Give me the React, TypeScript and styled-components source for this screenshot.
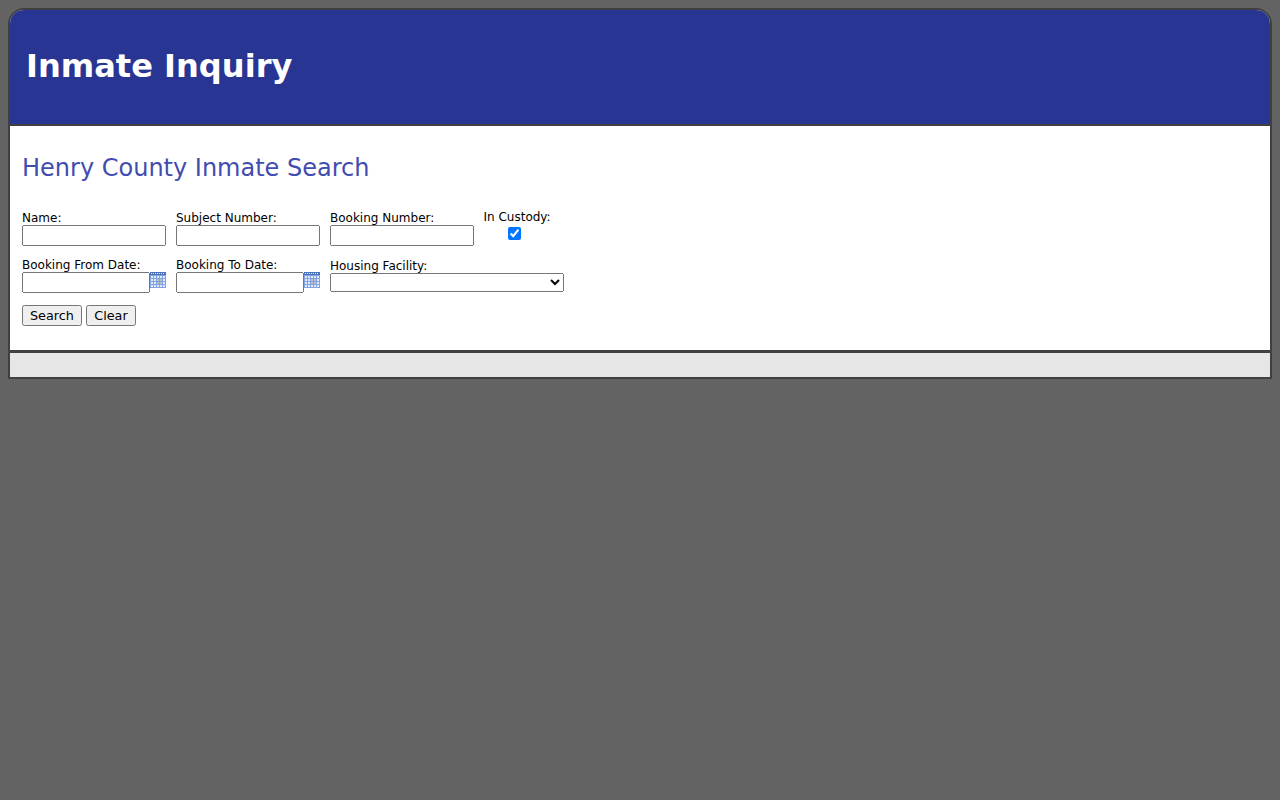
import React from "react";
import styled, { createGlobalStyle } from "styled-components";

const GlobalStyle = createGlobalStyle`
  html, body {
    margin: 0;
    min-height: 100%;
    background-color: #636363;
    font-family: "DejaVu Sans", sans-serif;
  }
`;

const CalendarIcon: React.FC = () => (
  <CalendarSvg width="16" height="16" viewBox="0 0 16 16" aria-hidden="true">
    <rect x="0" y="0" width="16" height="16" fill="#7fa3e4" />
    <rect x="0" y="0" width="16" height="3" fill="#4a72bd" />
    <path d="M1 1.5h1M3 1.5h1M5 1.5h1M7 1.5h1M9 1.5h1M11 1.5h1M13 1.5h1" stroke="#e4ecfa" strokeWidth="1" />
    {[4, 7, 10, 13].map((y) =>
      [1, 4, 7, 10, 13].map((x) => (
        <rect
          key={`${x}-${y}`}
          x={x}
          y={y}
          width="2"
          height="2"
          fill={x >= 7 && x <= 10 && y >= 7 && y <= 10 ? "#bdbdbd" : "#e2eafa"}
        />
      ))
    )}
  </CalendarSvg>
);

const App: React.FC = () => {
  return (
    <Page>
      <GlobalStyle />
      <Shell>
        <Header>
          <PageTitle>Inmate Inquiry</PageTitle>
        </Header>
        <Content>
          <SearchTitle>Henry County Inmate Search</SearchTitle>
          <Row>
            <Field>
              <Label htmlFor="name">Name:</Label>
              <TextInput id="name" type="text" />
            </Field>
            <Field>
              <Label htmlFor="subject">Subject Number:</Label>
              <TextInput id="subject" type="text" />
            </Field>
            <Field>
              <Label htmlFor="booking">Booking Number:</Label>
              <TextInput id="booking" type="text" />
            </Field>
            <CheckField>
              <CheckLabel htmlFor="custody">In Custody:</CheckLabel>
              <Checkbox id="custody" type="checkbox" defaultChecked />
            </CheckField>
          </Row>
          <DateRow>
            <Field>
              <Label htmlFor="from">Booking From Date:</Label>
              <DateGroup>
                <DateInput id="from" type="text" />
                <CalendarIcon />
              </DateGroup>
            </Field>
            <Field>
              <Label htmlFor="to">Booking To Date:</Label>
              <DateGroup>
                <DateInput id="to" type="text" />
                <CalendarIcon />
              </DateGroup>
            </Field>
            <SelectField>
              <SelectLabel htmlFor="facility">Housing Facility:</SelectLabel>
              <FacilitySelect id="facility">
                <option value=""></option>
              </FacilitySelect>
            </SelectField>
          </DateRow>
          <Buttons>
            <ActionButton type="button">Search</ActionButton>
            <ClearButton type="button">Clear</ClearButton>
          </Buttons>
        </Content>
        <Footer />
      </Shell>
    </Page>
  );
};

const Page = styled.div`
  padding: 8px;
`;

const Shell = styled.div`
  display: flex;
  flex-direction: column;
  border: 2px solid #404040;
  border-top-left-radius: 16px;
  border-top-right-radius: 16px;
  overflow: hidden;
  background-color: #ffffff;
`;

const Header = styled.div`
  display: flex;
  align-items: center;
  box-sizing: border-box;
  height: 116px;
  padding: 0 0 2px 16px;
  background-color: #283593;
  border-bottom: 2px solid #404040;
`;

const PageTitle = styled.h1`
  margin: 0;
  font-size: 32.1px;
  font-weight: bold;
  color: #ffffff;
`;

const Content = styled.div`
  display: flex;
  flex-direction: column;
  height: 224px;
  padding: 0 12px;
  box-sizing: border-box;
`;

const SearchTitle = styled.h2`
  margin: 28px 0 0;
  height: 56px;
  font-size: 24px;
  line-height: 28px;
  font-weight: normal;
  color: #3f4db0;
`;

const Row = styled.div`
  display: flex;
  gap: 10px;
`;

const DateRow = styled(Row)`
  margin-top: 11px;
`;

const Field = styled.div`
  display: flex;
  flex-direction: column;
  justify-content: flex-end;
  width: 144px;
`;

const SelectField = styled(Field)`
  width: 234px;
  justify-content: flex-start;
`;

const Label = styled.label`
  height: 15px;
  font-size: 12px;
  line-height: 17px;
  color: #000000;
`;

const SelectLabel = styled(Label)`
  line-height: 19px;
`;

const TextInput = styled.input`
  box-sizing: border-box;
  width: 144px;
  height: 21px;
  margin: 0;
  padding: 1px 2px;
  font-size: 13.333px;
  font-family: "DejaVu Sans", sans-serif;
`;

const DateGroup = styled.div`
  display: flex;
  align-items: flex-start;
`;

const DateInput = styled(TextInput)`
  width: 128px;
`;

const CalendarSvg = styled.svg`
  display: block;
  flex: none;
`;

const CheckField = styled.div`
  display: flex;
  flex-direction: column;
`;

const CheckLabel = styled(Label)`
  margin-left: -0.5px;
  height: 14px;
  line-height: 15px;
`;

const Checkbox = styled.input`
  width: 13px;
  height: 13px;
  margin: 3px 0 0 24px;
`;

const FacilitySelect = styled.select`
  box-sizing: border-box;
  width: 234px;
  height: 19px;
  margin: 1px 0 0;
  font-size: 13.333px;
  font-family: "DejaVu Sans", sans-serif;
`;

const Buttons = styled.div`
  display: flex;
  gap: 4px;
  margin-top: 12px;
`;

const ActionButton = styled.button`
  box-sizing: border-box;
  height: 21px;
  margin: 0;
  padding: 1px 6px;
  font-size: 12.8px;
  font-family: "DejaVu Sans", sans-serif;
`;

const ClearButton = styled(ActionButton)`
  width: 50px;
`;

const Footer = styled.div`
  height: 24px;
  background-color: #e6e6e6;
  border-top: 3px solid #404040;
`;

export default App;
